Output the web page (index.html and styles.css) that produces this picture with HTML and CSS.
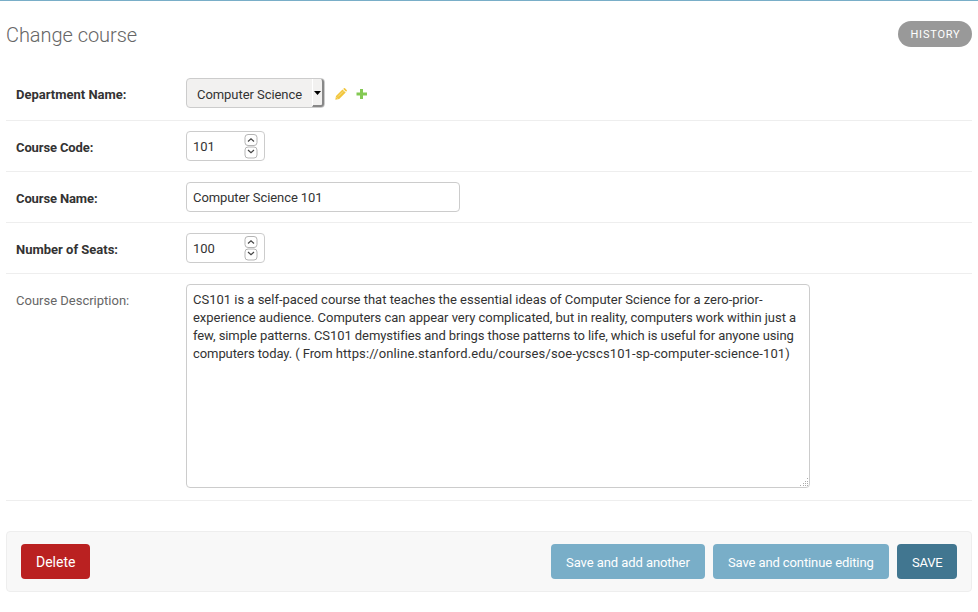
FILE: index.html
```html
<!DOCTYPE html>
<html lang="en">
<head>
<meta charset="utf-8">
<title>Change course</title>
<link rel="stylesheet" href="styles.css">
</head>
<body>
<main class="content">
  <header class="heading">
    <h1>Change course</h1>
    <a class="history">HISTORY</a>
  </header>
  <form class="fields">
    <div class="row row-tall">
      <label class="required">Department Name:</label>
      <div class="field select">
        <span class="select-text">Computer Science</span>
        <span class="select-button"><svg width="7" height="4" viewBox="0 0 7 4"><path d="M0 0h7L3.5 4z"/></svg></span>
      </div>
      <svg class="edit" width="12" height="12" viewBox="0 0 12 12">
        <path fill="#efb80b" opacity=".8" d="M.3 11.700 1 7.900 7.500 1.400 10.700 4.600 4.200 11z"/>
        <path fill="#efb80b" opacity=".8" d="M8.200.9 8.900.3q.6-.5 1.100 0l1.700 1.700q.5.5 0 1.100l-.6.700z"/>
        <path fill="none" stroke="#fff" stroke-width=".5" opacity=".8" d="M3 8.600 8.200 3.400M1.300 9.200l1.500 1.500"/>
      </svg>
      <svg class="add" width="11" height="10" viewBox="0 0 11 10"><path fill="#84c954" d="M4 0h3v3.500h4v3H7V10H4V6.500H.5v-3H4z"/></svg>
    </div>
    <div class="row">
      <label class="required tight">Course Code:</label>
      <div class="field number">
        <span>101</span>
        <svg class="spinner" width="14" height="26" viewBox="0 0 14 26"><g fill="#fff" stroke="#b5b5b5"><rect x="1" y="1.500" width="12" height="11" rx="3"/><rect x="1" y="14" width="12" height="11" rx="3"/></g><path fill="none" stroke="#444" stroke-width="1.200" d="M4 8.500 7 5.800l3 2.700M4 17 7 19.700l3-2.700"/></svg>
      </div>
    </div>
    <div class="row">
      <label class="required tight">Course Name:</label>
      <div class="field text">Computer Science 101</div>
    </div>
    <div class="row">
      <label class="required">Number of Seats:</label>
      <div class="field number">
        <span>100</span>
        <svg class="spinner" width="14" height="26" viewBox="0 0 14 26"><g fill="#fff" stroke="#b5b5b5"><rect x="1" y="1.500" width="12" height="11" rx="3"/><rect x="1" y="14" width="12" height="11" rx="3"/></g><path fill="none" stroke="#444" stroke-width="1.200" d="M4 8.500 7 5.800l3 2.700M4 17 7 19.700l3-2.700"/></svg>
      </div>
    </div>
    <div class="row row-tall">
      <label>Course Description:</label>
      <div class="field description">
        <span class="line">CS101 is a self-paced course that teaches the essential ideas of Computer Science for a zero-prior-</span>
        <span class="line line-2">experience audience. Computers can appear very complicated, but in reality, computers work within just a</span>
        <span class="line line-3">few, simple patterns. CS101 demystifies and brings those patterns to life, which is useful for anyone using</span>
        <span class="line line-4">computers today. ( From <span class="url">https://online.stanford.edu/courses/soe-ycscs101-sp-computer-science-101)</span></span>
        <svg class="grip" width="9" height="9" viewBox="0 0 9 9"><path fill="#aaa" d="M7 0h1v1H7zM5 3h1v1H5zM7 3h1v1H7zM3 5h1v1H3zM5 5h1v1H5zM7 5h1v1H7zM0 7h1v1H0zM3 7h1v1H3zM5 7h1v1H5zM7 7h1v1H7z"/></svg>
      </div>
    </div>
  </form>
  <footer class="submit-row">
    <a class="button delete">Delete</a>
    <a class="button add-another">Save and add another</a>
    <a class="button continue">Save and continue editing</a>
    <a class="button save">SAVE</a>
  </footer>
</main>
</body>
</html>
```
FILE: styles.css
```css
* { box-sizing: border-box; }
body {
  margin: 0;
  background: #fff;
  color: #333;
  font: 13px/18px Roboto, "Liberation Sans", sans-serif;
  border-top: 1px solid #79aec8;
}
.content { padding: 20px 6px 0; }
.heading {
  display: flex;
  justify-content: space-between;
  align-items: flex-start;
  height: 47px;
}
h1 {
  margin: 2px 0 0;
  font-size: 20px;
  line-height: 24px;
  font-weight: 300;
  letter-spacing: -0.05px;
  color: #666;
}
.history {
  width: 74px;
  height: 26px;
  padding-left: 1px;
  border-radius: 13px;
  background: #999;
  color: #fff;
  font-size: 11px;
  line-height: 27px;
  letter-spacing: 0.8px;
  text-align: center;
}
.row {
  display: flex;
  align-items: flex-start;
  padding: 10px 0 10px 10px;
  border-bottom: 1px solid #eee;
}
.row-tall { padding-bottom: 12px; }
label {
  width: 170px;
  padding-top: 8px;
  color: #666;
}
.required { font-weight: 700; color: #333; }
.tight { letter-spacing: -0.12px; }
.field {
  display: flex;
  align-items: center;
  height: 30px;
  border: 1px solid #ccc;
  border-radius: 4px;
  padding: 0 6px;
  white-space: nowrap;
}
.text { width: 274px; padding-top: 2px; letter-spacing: -0.08px; }
.number { width: 79px; justify-content: space-between; }
.number span { padding-top: 2px; }
.spinner { margin-top: -1px; }
.select {
  width: 139px;
  padding: 0 0 0 10px;
  justify-content: space-between;
  background: #f2f1f0;
}
.select-text { padding-top: 3px; letter-spacing: -0.06px; }
.select-button {
  display: flex;
  align-items: center;
  justify-content: center;
  width: 12px;
  height: 28px;
  padding-top: 2px;
  background: #f2f1f0;
  border: solid #888;
  border-width: 0 2px 2px 0;
  border-left: 1px solid #fff;
  border-radius: 0 3px 3px 0;
}
.edit { margin: 10px 0 0 10px; }
.add { margin: 11px 0 0 9px; }
.description {
  display: block;
  position: relative;
  width: 624px;
  height: 204px;
  padding: 6px;
}
.line { display: block; letter-spacing: -0.005px; }
.line-2 { letter-spacing: -0.032px; }
.line-3 { letter-spacing: -0.075px; }
.line-4 { letter-spacing: -0.08px; }
.url { letter-spacing: 0.12px; }
.grip { position: absolute; right: 0; bottom: 0; }
.submit-row {
  display: flex;
  gap: 8px;
  height: 61px;
  margin-top: 30px;
  padding: 12px 14px;
  background: #f8f8f8;
  border: 1px solid #eee;
  border-radius: 4px;
}
.button {
  height: 35px;
  padding: 0 15px;
  border-radius: 4px;
  background: #79aec8;
  color: #fff;
  line-height: 37px;
  white-space: nowrap;
}
.delete {
  margin-right: auto;
  background: #ba2121;
  font-size: 14px;
  line-height: 36px;
}
.add-another { width: 154px; letter-spacing: -0.07px; }
.continue { width: 176px; letter-spacing: -0.11px; }
.save { width: 60px; background: #417690; letter-spacing: -0.2px; }
```
